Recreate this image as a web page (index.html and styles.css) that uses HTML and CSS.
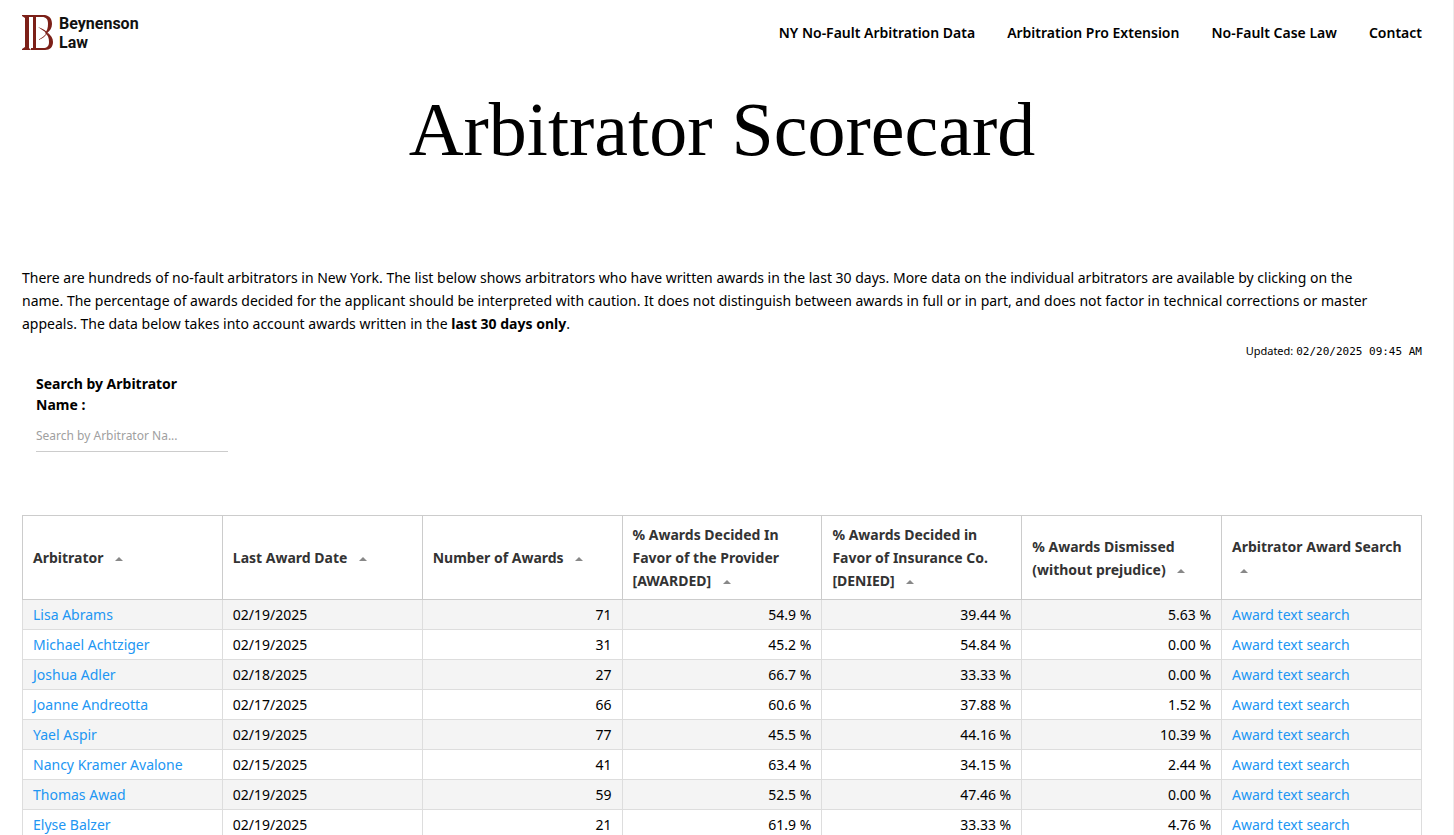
FILE: index.html
```html
<!DOCTYPE html>
<html lang="en">
<head>
    <meta charset="utf-8">
    <title>Arbitrator Scorecard</title>
    <link rel="stylesheet" href="styles.css">
</head>
<body>
    <div class="page">
        <header class="header">
            <a class="logo" href="#">
                <svg width="31" height="35" viewBox="0 0 31 35" fill="#7c2018">
                    <path d="M0 0H23C28 1 30 4 30 9C30 13 28 16 25 18C29 20 31 23 31 27C31 32 28 35 23 35H9V33H11V2H7V33L9 35H0V34L3 32V3L0 1ZM14 2V33H21C25 33 27 31 27 27C27 23 26 20 23 18C25 16 26 13 26 9C26 4 24 2 20 2Z" fill-rule="evenodd"/>
                    <path d="M16 12C20 13 25 16 29 21C25 18 20 15 16 12ZM16 25C20 23 23 20 26 17C24 21 20 24 16 25Z"/>
                </svg>
                <span class="logo-text">Beynenson<br>Law</span>
            </a>
            <nav class="nav">
                <a href="#">NY No-Fault Arbitration Data</a>
                <a href="#">Arbitration Pro Extension</a>
                <a href="#">No-Fault Case Law</a>
                <a href="#">Contact</a>
            </nav>
        </header>

        <h1 class="title">Arbitrator Scorecard</h1>

        <p class="intro">There are hundreds of no-fault arbitrators in New York. The list below shows arbitrators who have written awards in the last 30 days. More data on the individual arbitrators are available by clicking on the name. The percentage of awards decided for the applicant should be interpreted with caution. It does not distinguish between awards in full or in part, and does not factor in technical corrections or master appeals. The data below takes into account awards written in the <b>last 30 days only</b>.</p>
        <p class="updated">Updated: <span class="stamp">02/20/2025 09:45 AM</span></p>

        <div class="search">
            <label for="search">Search by Arbitrator Name&nbsp;:</label>
            <input id="search" type="text" placeholder="Search by Arbitrator Na...">
        </div>

        <table class="scores">
            <thead>
                <tr>
                    <th>Arbitrator <span class="arrow"></span></th>
                    <th>Last Award Date <span class="arrow"></span></th>
                    <th>Number of Awards <span class="arrow"></span></th>
                    <th>% Awards Decided In Favor of the Provider [AWARDED] <span class="arrow"></span></th>
                    <th>% Awards Decided in Favor of Insurance Co. [DENIED] <span class="arrow"></span></th>
                    <th>% Awards Dismissed (without prejudice) <span class="arrow"></span></th>
                    <th>Arbitrator Award Search <span class="arrow"></span></th>
                </tr>
            </thead>
            <tbody>
                <tr><td><a href="#">Lisa Abrams</a></td><td>02/19/2025</td><td class="num">71</td><td class="num">54.9 %</td><td class="num">39.44 %</td><td class="num">5.63 %</td><td><a href="#">Award text search</a></td></tr>
                <tr><td><a href="#">Michael Achtziger</a></td><td>02/19/2025</td><td class="num">31</td><td class="num">45.2 %</td><td class="num">54.84 %</td><td class="num">0.00 %</td><td><a href="#">Award text search</a></td></tr>
                <tr><td><a href="#">Joshua Adler</a></td><td>02/18/2025</td><td class="num">27</td><td class="num">66.7 %</td><td class="num">33.33 %</td><td class="num">0.00 %</td><td><a href="#">Award text search</a></td></tr>
                <tr><td><a href="#">Joanne Andreotta</a></td><td>02/17/2025</td><td class="num">66</td><td class="num">60.6 %</td><td class="num">37.88 %</td><td class="num">1.52 %</td><td><a href="#">Award text search</a></td></tr>
                <tr><td><a href="#">Yael Aspir</a></td><td>02/19/2025</td><td class="num">77</td><td class="num">45.5 %</td><td class="num">44.16 %</td><td class="num">10.39 %</td><td><a href="#">Award text search</a></td></tr>
                <tr><td><a href="#">Nancy Kramer Avalone</a></td><td>02/15/2025</td><td class="num">41</td><td class="num">63.4 %</td><td class="num">34.15 %</td><td class="num">2.44 %</td><td><a href="#">Award text search</a></td></tr>
                <tr><td><a href="#">Thomas Awad</a></td><td>02/19/2025</td><td class="num">59</td><td class="num">52.5 %</td><td class="num">47.46 %</td><td class="num">0.00 %</td><td><a href="#">Award text search</a></td></tr>
                <tr><td><a href="#">Elyse Balzer</a></td><td>02/19/2025</td><td class="num">21</td><td class="num">61.9 %</td><td class="num">33.33 %</td><td class="num">4.76 %</td><td><a href="#">Award text search</a></td></tr>
            </tbody>
        </table>
    </div>
</body>
</html>
```

FILE: styles.css
```css
* {
    box-sizing: border-box;
}
body {
    margin: 0;
    height: 100vh;
    overflow: hidden;
    background: #fff;
    color: #000;
    font-family: "Segoe UI", "Noto Sans", "Open Sans", sans-serif;
    font-size: 14px;
    line-height: 23px;
}
.page {
    min-height: 100vh;
    padding: 0 31px 0 22px;
    border-right: 1px solid #ececec;
}
.header {
    display: flex;
    justify-content: space-between;
    align-items: center;
    height: 65px;
}
.logo {
    display: flex;
    align-items: center;
    gap: 6px;
    color: #111;
    text-decoration: none;
}
.logo-text {
    font-family: Roboto, sans-serif;
    font-size: 16px;
    font-weight: bold;
    line-height: 19px;
}
.nav {
    display: flex;
    gap: 32px;
}
.nav a {
    color: #000;
    font-weight: 600;
    text-decoration: none;
}
.title {
    margin: 0;
    padding-top: 20px;
    height: 201px;
    font-family: Georgia, "Liberation Serif", serif;
    font-size: 76px;
    font-weight: normal;
    line-height: 88px;
    text-align: center;
}
.intro {
    margin: 0;
    padding-right: 30px;
}
.updated {
    margin: 4px 0 0;
    font-size: 11px;
    text-align: right;
}
.stamp {
    font-family: Consolas, "DejaVu Sans Mono", monospace;
}
.search {
    width: 220px;
    margin: 10px 0 63px;
    padding: 0 14px;
}
.search label {
    display: block;
    font-weight: bold;
    line-height: 21px;
}
.search input {
    display: block;
    width: 100%;
    height: 32px;
    margin-top: 5px;
    padding: 0;
    border: 0;
    border-bottom: 1px solid #ccc;
    font-family: inherit;
    font-size: 12px;
    outline: none;
}
.search input::placeholder {
    color: #a0a0a0;
    opacity: 1;
}
.scores {
    width: 100%;
    table-layout: fixed;
    border-collapse: collapse;
    border: 1px solid #ccc;
}
.scores th {
    height: 84px;
    padding: 0 10px;
    border: 1px solid #ccc;
    color: #333;
    text-align: left;
}
.scores td {
    height: 30px;
    padding: 0 10px;
    border: 1px solid #ddd;
}
.scores tbody tr:nth-child(odd) {
    background: #f4f4f4;
}
.scores a {
    color: #2196f3;
    text-decoration: none;
}
.scores .num {
    text-align: right;
}
.arrow {
    display: inline-block;
    margin-left: 8px;
    border: 4px solid transparent;
    border-top: 0;
    border-bottom-color: #888;
    vertical-align: middle;
}
```
